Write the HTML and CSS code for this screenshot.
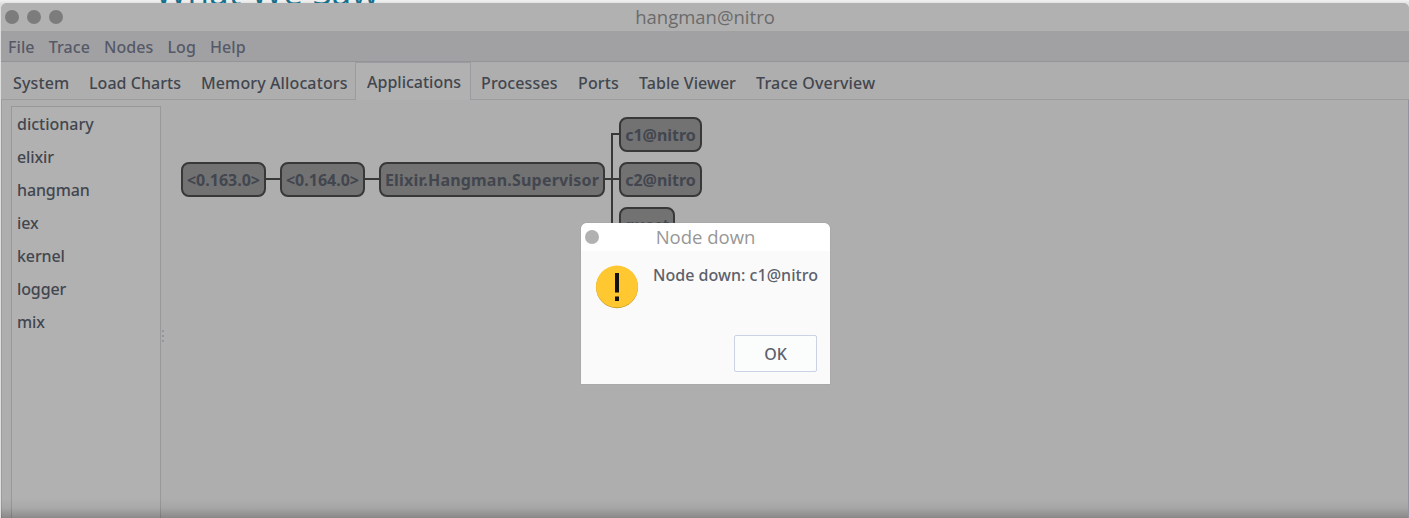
FILE: index.html
```html
<!DOCTYPE html>
<html lang="en">
<head>
<meta charset="utf-8">
<title>hangman@nitro</title>
<link rel="stylesheet" href="styles.css">
</head>
<body>
<div class="slide-title">What We Saw</div>
<main class="window">
  <header class="titlebar">
    <div class="controls"><i class="dot"></i><i class="dot"></i><i class="dot"></i></div>
    <span class="title">hangman@nitro</span>
  </header>
  <nav class="menubar"><span>File</span><span>Trace</span><span>Nodes</span><span>Log</span><span>Help</span></nav>
  <div class="tabs">
    <span class="tab">System</span><span class="tab">Load Charts</span><span class="tab">Memory Allocators</span><span class="tab active">Applications</span><span class="tab">Processes</span><span class="tab">Ports</span><span class="tab">Table Viewer</span><span class="tab">Trace Overview</span>
  </div>
  <section class="content">
    <ul class="apps"><li>dictionary</li><li>elixir</li><li>hangman</li><li>iex</li><li>kernel</li><li>logger</li><li>mix</li></ul>
    <div class="sash"><i></i><i></i><i></i></div>
    <div class="canvas">
      <svg class="links" width="560" height="200" fill="none" stroke="#383838" stroke-width="2"><path d="M101 79H116M200 79H215M440 79H455M455 34H447V140"/></svg>
      <div class="node n1">&lt;0.163.0&gt;</div>
      <div class="node n2">&lt;0.164.0&gt;</div>
      <div class="node n3">Elixir.Hangman.Supervisor</div>
      <div class="node n4">c1@nitro</div>
      <div class="node n5">c2@nitro</div>
      <div class="node n6">guest</div>
    </div>
  </section>
</main>
<div class="bottom-shade"></div>
<div class="dialog">
  <header class="dialog-bar"><i class="dot light"></i><span class="dialog-title">Node down</span></header>
  <div class="dialog-body">
    <svg class="warn" width="44" height="44" viewBox="0 0 44 44"><circle cx="22" cy="22.2" r="21" fill="#b58d22"/><circle cx="22" cy="21.6" r="21" fill="#ffc730"/><path d="M20 8h4v19.500h-4zM20 31.500h4v4.500h-4z" fill="#111"/></svg>
    <p class="message">Node down: c1@nitro</p>
  </div>
  <button class="ok">OK</button>
</div>
</body>
</html>
```
FILE: styles.css
```css
* { box-sizing: border-box; }
body { margin: 0; width: 1409px; height: 518px; overflow: hidden; position: relative; background: linear-gradient(#f2f2f2, #dedede 4px); font: 500 16px/22px "Noto Sans", sans-serif; color: #42464f; }
.slide-title { position: absolute; left: 155px; top: -32px; font: 500 35px/48px "Open Sans", sans-serif; letter-spacing: .2px; color: #16708c; white-space: nowrap; }
.window { position: absolute; left: 1px; top: 3px; width: 1408px; height: 515px; display: flex; flex-direction: column; background: #aeaeae; border-radius: 6px 6px 0 0; overflow: hidden; }
.titlebar { height: 28px; background: #b1b1b1; display: grid; grid-template-columns: 1fr auto 1fr; align-items: center; flex: none; }
.controls { display: flex; gap: 8px; padding-left: 4px; }
.dot { width: 14px; height: 14px; border-radius: 50%; background: #7c7c7c; }
.title, .dialog-title { font: 400 18.5px/28px "Open Sans", sans-serif; color: #6b6b6b; white-space: nowrap; }
.menubar { height: 31px; flex: none; background: #a1a1a3; border-bottom: 1px solid #949498; display: flex; gap: 14px; padding: 5px 7px; color: #555968; letter-spacing: .09px; }
.tabs { height: 38px; flex: none; display: flex; border-bottom: 1px solid #9c9c9f; padding-left: 2px; letter-spacing: .12px; }
.tab { flex: none; padding: 10px 0 0 10px; white-space: nowrap; }
.tab:nth-child(1) { width: 76px; }
.tab:nth-child(2) { width: 112px; letter-spacing: .05px; }
.tab:nth-child(3) { width: 164px; }
.tab:nth-child(4) { width: 116px; }
.tab:nth-child(5) { width: 97px; }
.tab:nth-child(6) { width: 61px; }
.tab:nth-child(7) { width: 117px; letter-spacing: .05px; }
.tab:nth-child(8) { letter-spacing: .2px; }
.tab.active { height: 38px; background: #b1b1b1; border: 1px solid #9a9aa0; border-bottom: 0; padding: 8px 0 0 11px; letter-spacing: 0; }
.content { flex: 1; display: flex; border-left: 1px solid #9c9c9c; border-right: 1px solid #9292a0; padding: 6px 0 0 9px; min-height: 0; }
.apps { width: 150px; margin: 0; padding: 1px 5px; list-style: none; background: #b1b1b1; border: 1px solid #989898; border-bottom: 0; line-height: 33px; letter-spacing: -.12px; }
.apps li:first-child { letter-spacing: 0; }
.sash { width: 4px; padding: 224px 0 0 1px; display: flex; flex-direction: column; gap: 3px; }
.sash i { width: 2px; height: 2px; background: #9494a0; }
.canvas { position: relative; flex: 1; margin-top: -6px; }
.links { position: absolute; left: 0; top: 0; }
.node { position: absolute; height: 35px; border: 2px solid #383838; border-radius: 8px; background: #727272; font-weight: 700; line-height: 32px; text-align: center; white-space: nowrap; }
.n1 { left: 16px; top: 62px; width: 85px; }
.n2 { left: 115px; top: 62px; width: 85px; }
.n3 { left: 214px; top: 62px; width: 226px; letter-spacing: .2px; }
.n4 { left: 454px; top: 17px; width: 83px; }
.n5 { left: 454px; top: 62px; width: 83px; }
.n6 { left: 454px; top: 107px; width: 56px; }
.bottom-shade { position: absolute; left: 1px; right: 1px; bottom: 0; height: 20px; background: linear-gradient(#0000, #0000000c 50%, #00000038); }
.dialog { position: absolute; left: 581px; top: 223px; width: 249px; height: 161px; background: #fafafa; border-radius: 6px 6px 0 0; overflow: hidden; box-shadow: 0 0 1px #777; display: flex; flex-direction: column; color: #5c616c; }
.dialog-bar { height: 28px; flex: none; background: #fff; display: grid; grid-template-columns: 1fr auto 1fr; align-items: center; padding-left: 4px; padding-right: 4px; }
.dot.light { background: #b1b1b1; }
.dialog-title { color: #979797; }
.dialog-body { flex: 1; display: flex; padding: 14px 0 0 14px; gap: 14px; }
.message { margin: -1px 0 0; white-space: nowrap; letter-spacing: .03px; }
.ok { align-self: flex-end; width: 83px; height: 37px; margin: 0 13px 12px; padding: 0; border: 1px solid #cbd2e3; border-radius: 2px; background: #fbfdfd; font: inherit; color: inherit; }
```
